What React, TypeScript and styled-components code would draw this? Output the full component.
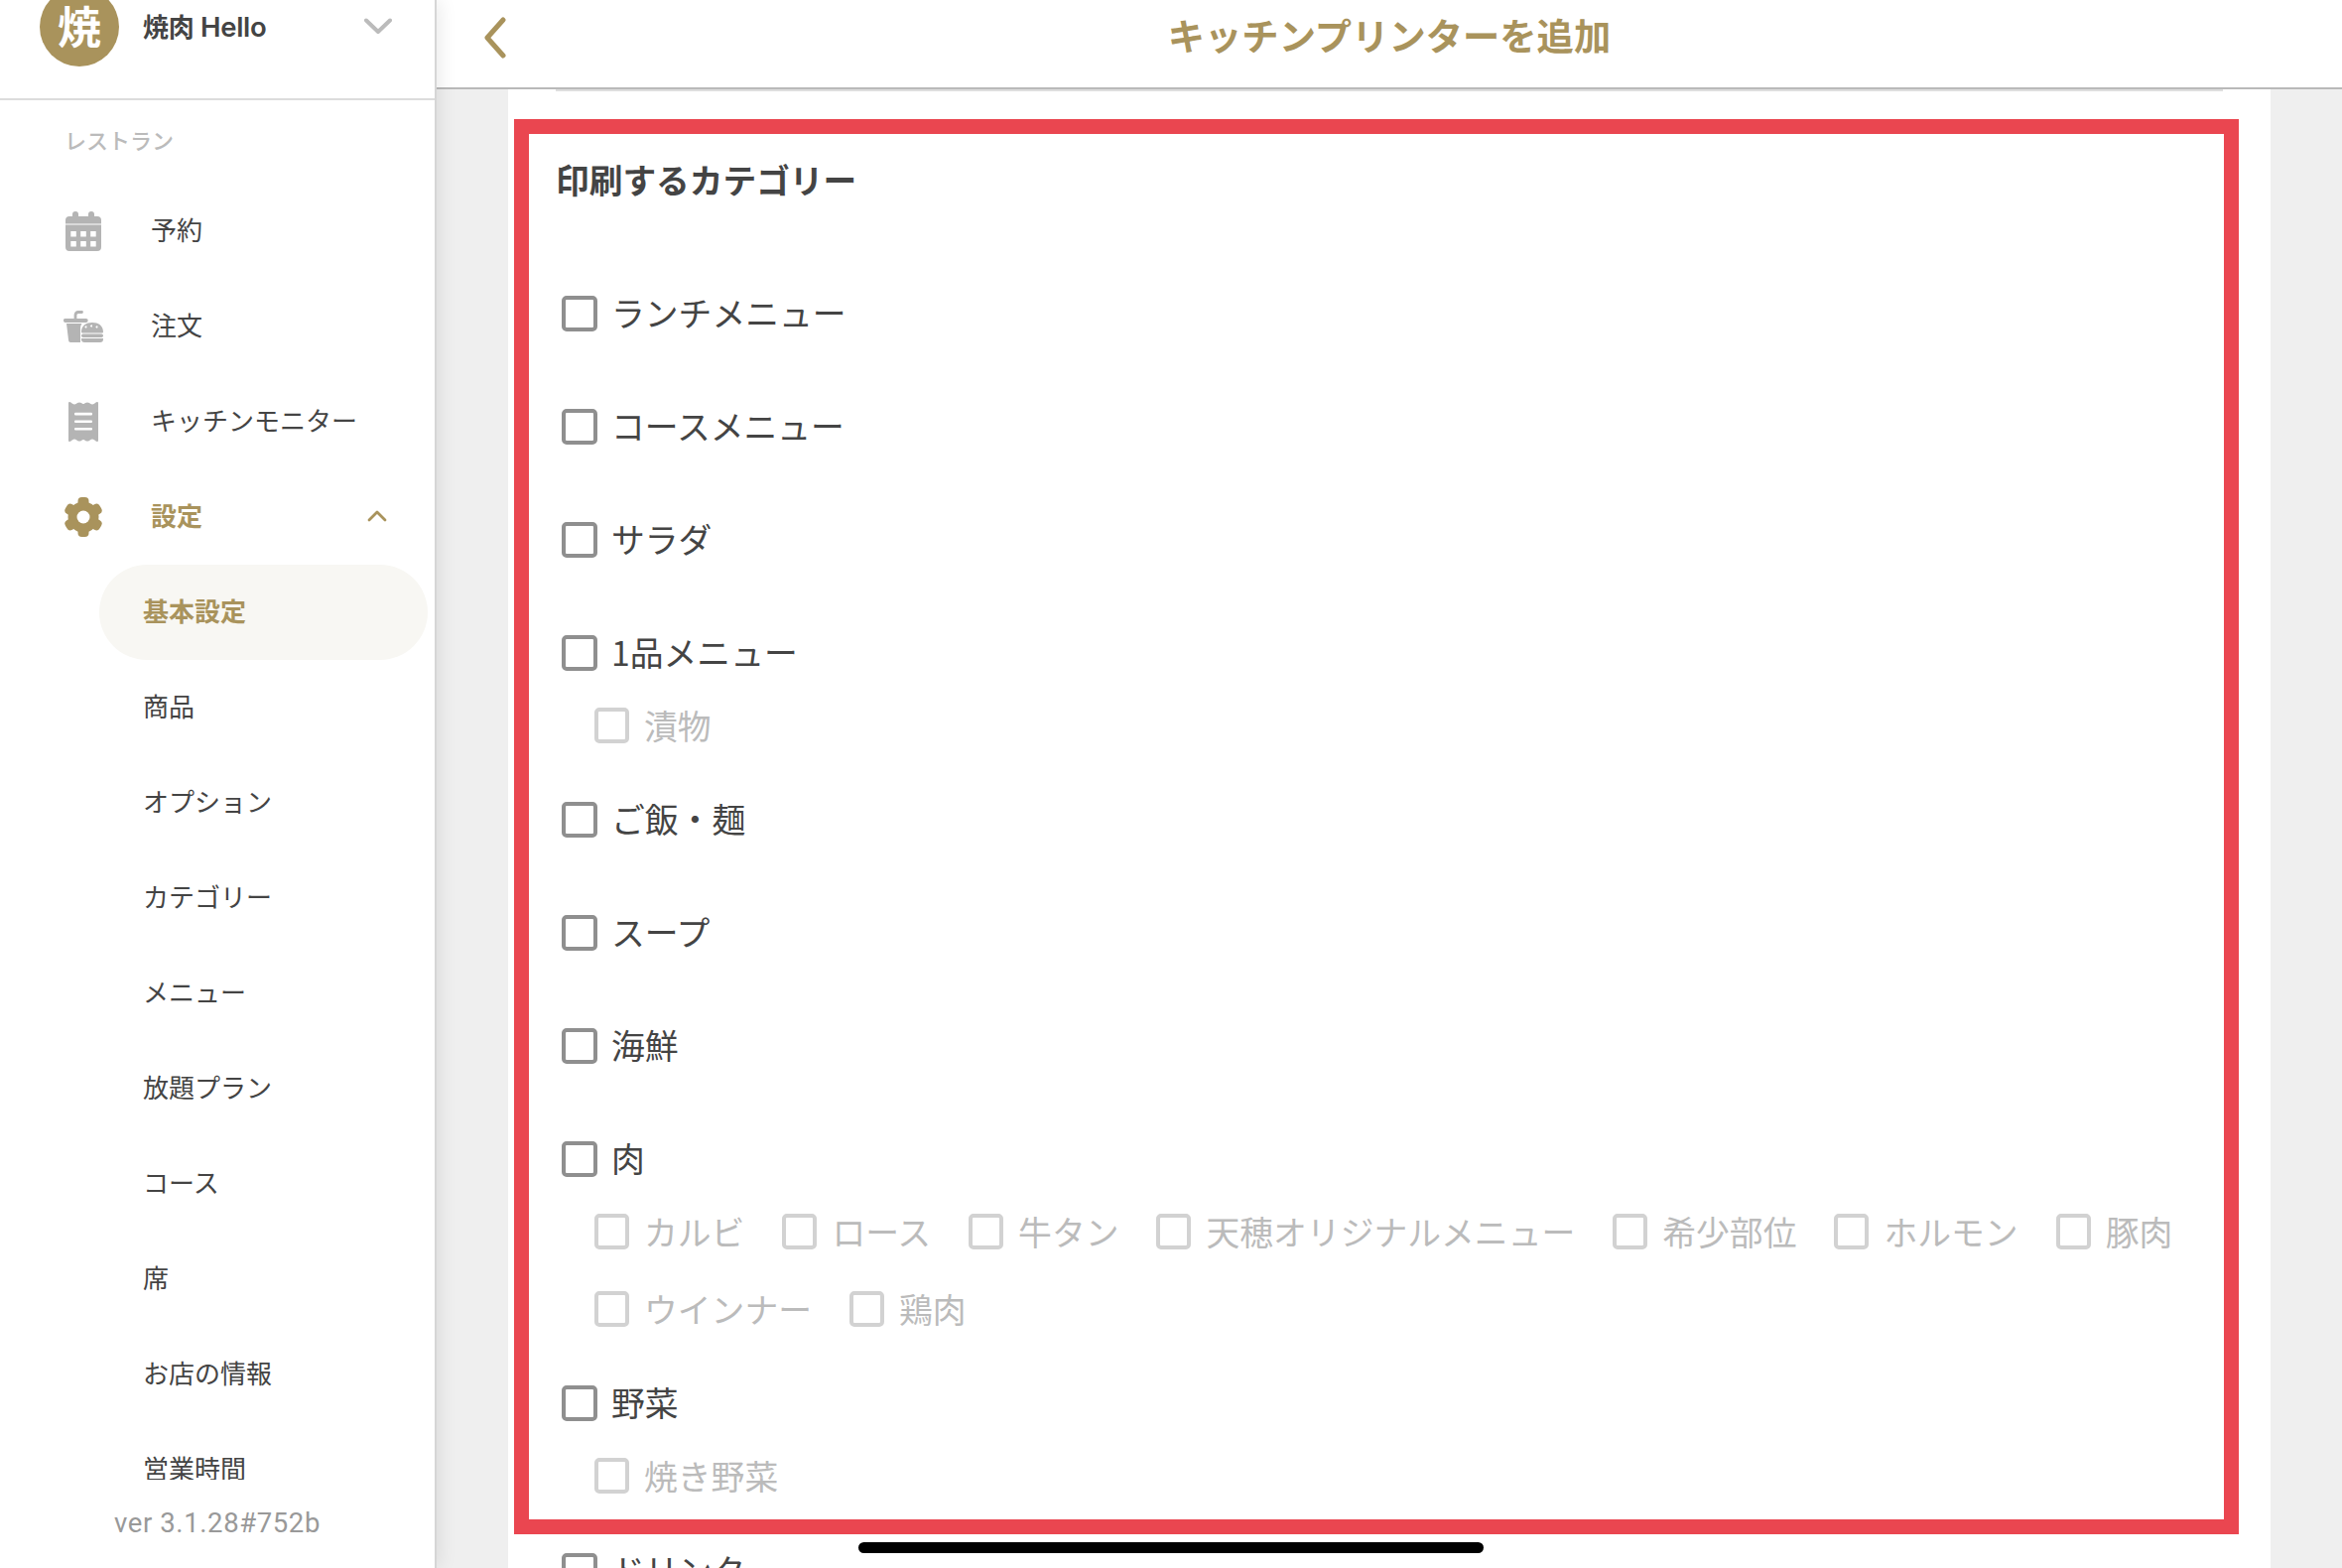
import React from "react";
import styled, { createGlobalStyle } from "styled-components";

const GOLD = "#a9935c";
const FONT = `"Noto Sans CJK JP", "Noto Sans", sans-serif`;

const Global = createGlobalStyle`
  html, body { margin: 0; padding: 0; background: #efefef; overflow: hidden; }
  * { box-sizing: border-box; }
  body { font-family: ${FONT}; color: #444; }
`;

const Page = styled.div`
  display: flex;
  width: 2360px;
  height: 1580px;
  overflow: hidden;
  position: relative;
`;

const Sidebar = styled.aside`
  width: 440px;
  height: 100%;
  flex: none;
  display: flex;
  flex-direction: column;
  background: #fff;
  border-right: 2px solid #d6d6d6;
  box-shadow: 2px 0 18px rgba(0, 0, 0, 0.09);
  z-index: 2;
`;

const Brand = styled.div`
  height: 101px;
  flex: none;
  display: flex;
  align-items: center;
  gap: 25px;
  padding: 0 43px 46px 40px;
  border-bottom: 2px solid #dcdcdc;
`;

const Avatar = styled.div`
  width: 80px;
  height: 80px;
  flex: none;
  border-radius: 50%;
  background: ${GOLD};
  color: #fff;
  font-size: 44px;
  font-weight: 700;
  line-height: 76px;
  text-align: center;
`;

const BrandName = styled.span`
  font-family: Inter, ${FONT};
  font-size: 27.5px;
  font-weight: 600;
  color: #444;
  margin: 0 0 2px -1px;
  letter-spacing: -0.3px;
`;

const BrandKanji = styled.span`
  font-family: ${FONT};
  font-size: 26px;
  font-weight: 700;
`;

const Caret = styled.svg<{ $lift?: boolean }>`
  margin-left: auto;
  margin-bottom: ${(p) => (p.$lift ? 3 : 0)}px;
  flex: none;
  display: block;
`;

const Nav = styled.nav`
  flex: 1;
  min-height: 0;
  overflow: hidden;
`;

const NavLabel = styled.div`
  height: 84px;
  padding: 0 0 7px 65px;
  display: flex;
  align-items: center;
  font-size: 22px;
  font-weight: 500;
  color: #bbb;
`;

const NavItem = styled.div<{ $active?: boolean }>`
  height: 96px;
  display: flex;
  align-items: center;
  padding: 0 48px 0 60px;
  font-size: 26px;
  font-weight: ${(p) => (p.$active ? 700 : 400)};
  color: ${(p) => (p.$active ? GOLD : "#444")};
`;

const NavText = styled.span`
  margin-bottom: 6px;
`;

const IconSlot = styled.span`
  width: 48px;
  height: 48px;
  margin-right: 44px;
  flex: none;
  display: flex;
  align-items: center;
  justify-content: center;
`;

const SubItem = styled.div<{ $active?: boolean }>`
  height: 96px;
  margin: 0 7px 0 100px;
  padding: 0 0 6px 44px;
  display: flex;
  align-items: center;
  border-radius: 48px;
  font-size: 26px;
  font-weight: ${(p) => (p.$active ? 700 : 400)};
  color: ${(p) => (p.$active ? GOLD : "#444")};
  background: ${(p) => (p.$active ? "#f8f7f3" : "transparent")};
`;

const Version = styled.div`
  height: 89px;
  flex: none;
  padding-bottom: 2px;
  display: flex;
  align-items: center;
  justify-content: center;
  font-family: Roboto, ${FONT};
  font-size: 27.5px;
  color: #999;
  letter-spacing: 0.6px;
`;

const Main = styled.main`
  flex: 1;
  min-width: 0;
  display: flex;
  flex-direction: column;
  background: #efefef;
`;

const TopBar = styled.header`
  height: 90px;
  flex: none;
  position: relative;
  display: flex;
  align-items: center;
  justify-content: center;
  padding-bottom: 19px;
  background: #fff;
  border-bottom: 2px solid #b9b9b9;
`;

const BackIcon = styled.svg`
  position: absolute;
  left: 44px;
  top: 16px;
`;

const Title = styled.h1`
  margin: 0;
  font-size: 37.3px;
  font-weight: 700;
  line-height: 50px;
  color: ${GOLD};
`;

const Card = styled.div`
  flex: 1;
  min-height: 0;
  width: 1776px;
  margin-left: 72px;
  overflow: hidden;
  background: #fff;
`;

const Divider = styled.div`
  height: 2px;
  margin: 0 48px 28px;
  background: #dedede;
`;

const Outlined = styled.section`
  width: 1738px;
  height: 1426px;
  margin-left: 6px;
  padding: 23px 0 0 27px;
  overflow: hidden;
  border: 15.5px solid #ea4650;
`;

const Heading = styled.h2`
  margin: 0 0 93px;
  font-size: 33.7px;
  font-weight: 700;
  line-height: 46px;
  color: #444;
`;

const Group = styled.div<{ $nested?: boolean }>`
  margin: 0 0 ${(p) => (p.$nested ? 59 : 78)}px 6px;
`;

const CheckRow = styled.label<{ $outside?: boolean }>`
  height: 36px;
  display: flex;
  align-items: center;
  gap: 14px;
  font-size: 33.8px;
  color: #444;
  margin: ${(p) => (p.$outside ? "18px 0 0 54px" : "0")};
`;

const RowText = styled.span`
  margin-bottom: 2px;
`;

const Box = styled.span`
  width: 36px;
  height: 36px;
  flex: none;
  margin-top: 1px;
  border: 4.5px solid #8f8f8f;
  border-radius: 5px;
  background: #fff;
`;

const SubList = styled.div`
  display: flex;
  flex-wrap: wrap;
  gap: 42px 38px;
  margin-top: 37px;
  padding-left: 33px;
`;

const SubCheck = styled.label`
  height: 36px;
  display: flex;
  align-items: center;
  gap: 15px;
  font-size: 33.8px;
  color: #bbb;
`;

const SubBox = styled.span`
  width: 35px;
  height: 36px;
  flex: none;
  margin-top: 2px;
  border: 4.5px solid #d2d2d2;
  border-radius: 5px;
  background: #fff;
`;

const HomeBar = styled.div`
  position: absolute;
  left: 865px;
  top: 1554px;
  width: 630px;
  height: 11px;
  border-radius: 6px;
  background: #000;
  z-index: 3;
`;

const CalendarIcon = () => (
  <svg width="36" height="40" viewBox="0 0 36 40">
    <path fill="#b4b4b4" d="M10 0a3 3 0 0 1 3 3v2h10V3a3 3 0 0 1 6 0v2h3a4 4 0 0 1 4 4v3.500H0V9a4 4 0 0 1 4-4h3V3a3 3 0 0 1 3-3z" />
    <path
      fill="#b4b4b4"
      fillRule="evenodd"
      d="M0 13.500h36V36a4 4 0 0 1-4 4H4a4 4 0 0 1-4-4zM5.300 20v5.500h5.500V20zM15.200 20v5.500h5.600V20zM25.200 20v5.500h5.500V20zM5.300 30v5.500h5.500V30zM15.200 30v5.500h5.600V30zM25.200 30v5.500h5.500V30z"
    />
  </svg>
);

const OrderIcon = () => (
  <svg width="40" height="32" viewBox="0 0 40 32">
    <path fill="none" stroke="#b4b4b4" strokeWidth="2.800" strokeLinecap="round" d="M12 8.500V4.500q0-3 3-3h3.500" />
    <path fill="#b4b4b4" d="M1.800 8h21a1.800 1.800 0 0 1 1.800 2v.3a1.800 1.800 0 0 1-1.800 1.700h-21A1.800 1.800 0 0 1 0 10.200V10a1.800 1.800 0 0 1 1.800-2z" />
    <path fill="#b4b4b4" d="M3 13h15.500Q17 15 17 17.500V32H7q-1.700 0-1.900-1.700z" />
    <path
      fill="#b4b4b4"
      fillRule="evenodd"
      d="M18 21.500C18 15 23 12 29 12s11 3 11 9.500a1 1 0 0 1-1 1H19a1 1 0 0 1-1-1zM23.500 16.500a1 1 0 1 0 0 .01zM29 15.500a1 1 0 1 0 0 .01zM34.500 16.500a1 1 0 1 0 0 .01z"
    />
    <rect x="18" y="23.500" width="22" height="3.400" rx="1.700" fill="#b4b4b4" />
    <path fill="#b4b4b4" d="M18 28h22v.8a3.200 3.200 0 0 1-3.200 3.200H21.200a3.200 3.200 0 0 1-3.200-3.200z" />
  </svg>
);

const ReceiptIcon = () => (
  <svg width="30" height="40" viewBox="0 0 30 40">
    <path
      fill="#b4b4b4"
      d="M0 1q0-1 1-1t2 1l1 .8q2 1.200 4 0L9 1q2-1.200 4 0l1 .8q1 .6 2 0L17 1q2-1.200 4 0l1 .8q2 1.200 4 0L27 1q1-1 2-1t1 1v38q0 1-1 1t-2-1l-1-.8q-2-1.200-4 0L21 39q-2 1.200-4 0l-1-.8q-1-.6-2 0L13 39q-2 1.200-4 0l-1-.8q-2-1.200-4 0L3 39q-1 1-2 1t-1-1z"
    />
    <rect x="6" y="10.800" width="18" height="2.600" rx="1" fill="#fff" />
    <rect x="6" y="18.400" width="18" height="2.600" rx="1" fill="#fff" />
    <rect x="6" y="26" width="18" height="2.600" rx="1" fill="#fff" />
  </svg>
);

const GearIcon = () => (
  <svg width="40" height="40" viewBox="0 0 40 40">
    <g fill={GOLD}>
      <circle cx="20" cy="20" r="15.500" />
      {[0, 60, 120, 180, 240, 300].map((a) => (
        <rect key={a} x="14.500" y="0" width="11" height="12" rx="4" transform={`rotate(${a} 20 20)`} />
      ))}
    </g>
    <circle cx="20" cy="20" r="6.500" fill="#fff" />
  </svg>
);

type Cat = { name: string; subs?: string[] };

const cats: Cat[] = [
  { name: "ランチメニュー" },
  { name: "コースメニュー" },
  { name: "サラダ" },
  { name: "1品メニュー", subs: ["漬物"] },
  { name: "ご飯・麺" },
  { name: "スープ" },
  { name: "海鮮" },
  {
    name: "肉",
    subs: ["カルビ", "ロース", "牛タン", "天穂オリジナルメニュー", "希少部位", "ホルモン", "豚肉", "ウインナー", "鶏肉"],
  },
  { name: "野菜", subs: ["焼き野菜"] },
];

const subMenu = ["商品", "オプション", "カテゴリー", "メニュー", "放題プラン", "コース", "席", "お店の情報", "営業時間"];

export default function App() {
  return (
    <Page>
      <Global />
      <Sidebar>
        <Brand>
          <Avatar>焼</Avatar>
          <BrandName>
            <BrandKanji>焼肉</BrandKanji> Hello
          </BrandName>
          <Caret width="28" height="17" viewBox="0 0 28 17">
            <polyline points="2,2.500 14,14 26,2.500" fill="none" stroke="#bbb" strokeWidth="4" strokeLinecap="round" strokeLinejoin="round" />
          </Caret>
        </Brand>
        <Nav>
          <NavLabel>レストラン</NavLabel>
          <NavItem>
            <IconSlot>
              <CalendarIcon />
            </IconSlot>
            <NavText>予約</NavText>
          </NavItem>
          <NavItem>
            <IconSlot>
              <OrderIcon />
            </IconSlot>
            <NavText>注文</NavText>
          </NavItem>
          <NavItem>
            <IconSlot>
              <ReceiptIcon />
            </IconSlot>
            <NavText>キッチンモニター</NavText>
          </NavItem>
          <NavItem $active>
            <IconSlot>
              <GearIcon />
            </IconSlot>
            <NavText>設定</NavText>
            <Caret $lift width="20" height="13" viewBox="0 0 20 13">
              <polyline points="2,11 10,3 18,11" fill="none" stroke={GOLD} strokeWidth="2.800" strokeLinecap="round" strokeLinejoin="round" />
            </Caret>
          </NavItem>
          <SubItem $active>基本設定</SubItem>
          {subMenu.map((s) => (
            <SubItem key={s}>{s}</SubItem>
          ))}
        </Nav>
        <Version>ver 3.1.28#752b</Version>
      </Sidebar>
      <Main>
        <TopBar>
          <BackIcon width="28" height="44" viewBox="0 0 28 44">
            <polyline points="23,4 7,22 23,40" fill="none" stroke={GOLD} strokeWidth="5" strokeLinecap="round" strokeLinejoin="round" />
          </BackIcon>
          <Title>キッチンプリンターを追加</Title>
        </TopBar>
        <Card>
          <Divider />
          <Outlined>
            <Heading>印刷するカテゴリー</Heading>
            {cats.map((c) => (
              <Group key={c.name} $nested={!!c.subs}>
                <CheckRow>
                  <Box />
                  <RowText>{c.name}</RowText>
                </CheckRow>
                {c.subs && (
                  <SubList>
                    {c.subs.map((s) => (
                      <SubCheck key={s}>
                        <SubBox />
                        {s}
                      </SubCheck>
                    ))}
                  </SubList>
                )}
              </Group>
            ))}
          </Outlined>
          <CheckRow $outside>
            <Box />
            <RowText>ドリンク</RowText>
          </CheckRow>
        </Card>
      </Main>
      <HomeBar />
    </Page>
  );
}
